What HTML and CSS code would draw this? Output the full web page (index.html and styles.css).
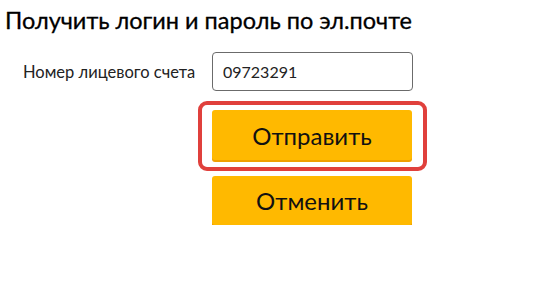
FILE: index.html
```html
<!DOCTYPE html>
<html lang="ru">
<head>
<meta charset="UTF-8">
<meta name="viewport" content="width=device-width, initial-scale=1.0">
<title>Получить логин и пароль</title>
<link rel="stylesheet" href="styles.css">
</head>
<body>
<div class="recover">
  <h2 class="recover-title">Получить логин и пароль по эл.почте</h2>

  <div class="form-row">
    <label class="form-label" for="account">Номер лицевого счета</label>
    <input class="form-input" id="account" type="text" value="09723291">
  </div>

  <!-- highlighted submit -->
  <div class="highlight">
    <button class="btn" type="button">Отправить</button>
  </div>
  <button class="btn btn-cancel" type="button">Отменить</button>
</div>
</body>
</html>
```

FILE: styles.css
```css
body {
  margin: 0;
  background: #ffffff;
  font-family: Lato, "Open Sans", sans-serif;
  color: #111111;
}

.recover {
  padding-top: 3px;
}

.recover-title {
  margin: 0;
  padding-left: 5px;
  font-size: 23.5px;
  font-weight: normal;
  line-height: 34px;
  color: #000000;
  -webkit-text-stroke: 0.3px #000000;
}

.form-row {
  display: flex;
  align-items: center;
  margin-top: 15px;
  padding-left: 23px;
}

.form-label {
  width: 189px;
  font-size: 16.5px;
  color: #222222;
}

.form-input {
  box-sizing: border-box;
  width: 201px;
  height: 39px;
  padding: 0 10px;
  border: 1px solid #6b6b6b;
  border-radius: 4px;
  font-family: inherit;
  font-size: 16px;
  color: #222222;
  outline: none;
}

.highlight {
  box-sizing: border-box;
  width: 229px;
  margin: 10px 0 0 198px;
  padding: 5px 11px 7px 10px;
  border: 4px solid #e0403c;
  border-radius: 9px;
}

.btn {
  display: block;
  width: 200px;
  height: 50px;
  padding: 0;
  border: none;
  border-radius: 3px;
  background: #ffb900;
  box-shadow: 0 2px 0 #f0a000;
  font-family: inherit;
  font-size: 24px;
  color: #111111;
  cursor: pointer;
}

.btn-cancel {
  height: 49px;
  margin: 5px 0 0 212px;
}
```
